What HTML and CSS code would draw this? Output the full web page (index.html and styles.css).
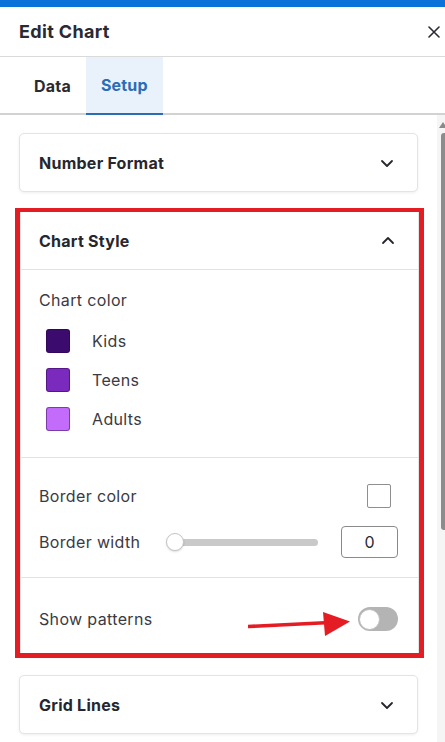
FILE: index.html
```html
<!DOCTYPE html>
<html lang="en">
<head>
<meta charset="utf-8">
<title>Edit Chart</title>
<link rel="stylesheet" href="styles.css">
</head>
<body>
<div class="topbar"></div>
<header class="header">
  <h1 class="title">Edit Chart</h1>
  <button class="close" aria-label="Close">
    <svg width="12" height="12" viewBox="0 0 12 12"><path d="M1 1 L11 11 M11 1 L1 11" stroke="#2b2b33" stroke-width="1.6" fill="none" stroke-linecap="round"/></svg>
  </button>
</header>
<nav class="tabs">
  <div class="tab">Data</div>
  <div class="tab active">Setup</div>
</nav>
<div class="main">
  <div class="content">
    <section class="card">
      <div class="card-head">
        <span class="card-title">Number Format</span>
        <svg class="chev" width="14" height="14" viewBox="0 0 14 14"><path d="M2 5 L7 10 L12 5" stroke="#26262e" stroke-width="1.8" fill="none" stroke-linecap="round" stroke-linejoin="round"/></svg>
      </div>
    </section>

    <div class="highlight">
      <section class="card card-open">
        <div class="card-head head-open">
          <span class="card-title">Chart Style</span>
          <svg class="chev" width="14" height="14" viewBox="0 0 14 14"><path d="M2 9 L7 4 L12 9" stroke="#26262e" stroke-width="1.8" fill="none" stroke-linecap="round" stroke-linejoin="round"/></svg>
        </div>
        <div class="sec sec-colors">
          <div class="label">Chart color</div>
          <ul class="series">
            <li class="serie"><span class="sw sw-kids"></span><span class="label">Kids</span></li>
            <li class="serie"><span class="sw sw-teens"></span><span class="label">Teens</span></li>
            <li class="serie"><span class="sw sw-adults"></span><span class="label">Adults</span></li>
          </ul>
        </div>
        <div class="sec sec-border">
          <div class="row">
            <span class="label">Border color</span>
            <span class="color-box"></span>
          </div>
          <div class="row row-width">
            <span class="label">Border width</span>
            <div class="slider"><div class="track"></div><div class="thumb"></div></div>
            <div class="num">0</div>
          </div>
        </div>
        <div class="sec sec-pattern">
          <div class="row">
            <span class="label">Show patterns</span>
            <span class="toggle"><span class="knob"></span></span>
          </div>
          <svg class="arrow" width="104" height="26" viewBox="0 0 104 26">
            <path d="M0 14.5 L82 10.5" stroke="#e41c23" stroke-width="3.6" fill="none"/>
            <polygon points="75,0 102,9.5 77,24" fill="#e41c23"/>
          </svg>
        </div>
      </section>
    </div>

    <section class="card">
      <div class="card-head">
        <span class="card-title">Grid Lines</span>
        <svg class="chev" width="14" height="14" viewBox="0 0 14 14"><path d="M2 5 L7 10 L12 5" stroke="#26262e" stroke-width="1.8" fill="none" stroke-linecap="round" stroke-linejoin="round"/></svg>
      </div>
    </section>
  </div>
  <div class="scrollbar">
    <svg class="sb-arrow" width="8" height="8" viewBox="0 0 8 8"><polygon points="4,1 8,7 0,7" fill="#8a8a8a"/></svg>
    <div class="sb-thumb"></div>
  </div>
</div>
</body>
</html>
```

FILE: styles.css
```css
* { box-sizing: border-box; }
html, body {
  margin: 0;
  padding: 0;
  background: #ffffff;
  height: 742px;
  overflow: hidden;
}
body {
  font-family: Inter, "Noto Sans", "Liberation Sans", sans-serif;
  color: #2a2a33;
}
.topbar {
  height: 7px;
  background: #0a72d8;
}
.header {
  height: 50px;
  display: flex;
  align-items: center;
  justify-content: space-between;
  padding: 0 5px 0 19px;
  border-bottom: 1px solid #dadada;
}
.title {
  margin: 0;
  font-size: 18px;
  font-weight: 700;
  color: #2a2a33;
  letter-spacing: 0.35px;
}
.close {
  background: none;
  border: 0;
  padding: 0;
  width: 12px;
  height: 12px;
  display: flex;
}
.tabs {
  display: flex;
  padding-left: 19px;
  border-bottom: 2px solid #d2d2d2;
  height: 58px;
}
.tab {
  padding: 0 15px;
  display: flex;
  align-items: center;
  font-size: 16px;
  font-weight: 700;
  letter-spacing: 0.2px;
  color: #2a2a33;
  height: 58px;
}
.tab.active {
  background: #e9f2fb;
  color: #2b6cb6;
  border-bottom: 2px solid #2b6cb6;
}
.main {
  display: flex;
}
.content {
  flex: 1;
  padding: 18px 19px 0 19px;
  display: flex;
  flex-direction: column;
}
.card {
  background: #fff;
  border: 1px solid #e4e4e4;
  border-radius: 5px;
  box-shadow: 0 1px 3px rgba(0, 0, 0, 0.07);
}
.card-head {
  height: 57px;
  display: flex;
  align-items: center;
  justify-content: space-between;
  padding: 0 23px 0 19px;
}
.card-title {
  font-size: 16px;
  font-weight: 700;
  letter-spacing: 0.25px;
  color: #26262e;
}
.chev { display: block; }
.highlight {
  margin: 16px -6px 17px -4px;
  border: 5px solid #e41c23;
  border-top-width: 4px;
}
.card-open {
  border-radius: 0;
  box-shadow: none;
  border-top: 0;
  border-bottom: 0;
}
.head-open {
  height: 58px;
  padding-left: 18px;
  border-bottom: 1px solid #e2e2e2;
}
.sec {
  padding: 0 20px 0 18px;
  border-bottom: 1px solid #e2e2e2;
}
.sec-pattern {
  border-bottom: 0;
  position: relative;
}
.label {
  font-size: 16px;
  line-height: 22px;
  letter-spacing: 0.35px;
  color: #3a3a44;
}
.sec-colors {
  padding-top: 19px;
  padding-bottom: 26px;
}
.series {
  list-style: none;
  margin: 18px 0 0 0;
  padding: 0 0 0 7px;
  display: flex;
  flex-direction: column;
  gap: 15px;
}
.serie {
  display: flex;
  align-items: center;
  gap: 22px;
  height: 24px;
}
.sw {
  width: 24px;
  height: 24px;
  border-radius: 3px;
  border: 1px solid rgba(40, 0, 70, 0.45);
}
.sw-kids { background: #3c0b6e; }
.sw-teens { background: #7a2bbe; }
.sw-adults { background: #c36cfb; }
.sec-border {
  padding-top: 26px;
  padding-bottom: 19px;
  display: flex;
  flex-direction: column;
  gap: 18px;
}
.row {
  display: flex;
  align-items: center;
  justify-content: space-between;
}
.color-box {
  width: 24px;
  height: 24px;
  border: 1px solid #8f8f8f;
  border-radius: 2px;
  margin-right: 7px;
  background: #fff;
}
.row-width {
  justify-content: flex-start;
}
.slider {
  position: relative;
  width: 153px;
  height: 18px;
  margin-left: 26px;
  display: flex;
  align-items: center;
}
.track {
  margin-left: 9px;
  width: 143px;
  height: 7px;
  border-radius: 4px;
  background: #c9c9c9;
}
.thumb {
  position: absolute;
  left: 0;
  top: 0;
  width: 18px;
  height: 18px;
  border-radius: 50%;
  background: #fff;
  border: 1px solid #c4c4c4;
  box-shadow: 0 1px 2px rgba(0, 0, 0, 0.15);
}
.num {
  margin-left: auto;
  width: 57px;
  height: 32px;
  border: 1px solid #8a8a8a;
  border-radius: 4px;
  display: flex;
  align-items: center;
  justify-content: center;
  font-size: 16px;
  color: #2a2a33;
}
.sec-pattern {
  padding-top: 29px;
  padding-bottom: 22px;
}
.toggle {
  width: 40px;
  height: 24px;
  border-radius: 12px;
  background: #b4b4b4;
  display: flex;
  align-items: center;
  padding-left: 1px;
}
.knob {
  width: 21px;
  height: 21px;
  border-radius: 50%;
  background: #fff;
  border: 1px solid #bdbdbd;
}
.arrow {
  position: absolute;
  left: 227px;
  top: 34px;
}
.scrollbar {
  width: 8px;
  background: #f5f5f5;
  height: 627px;
  display: flex;
  flex-direction: column;
  align-items: flex-end;
}
.sb-arrow {
  margin-top: 6px;
  margin-right: -2px;
}
.sb-thumb {
  margin-top: 4px;
  width: 4px;
  height: 397px;
  background: #8c8c8c;
  border-radius: 3px 0 0 3px;
}
```
